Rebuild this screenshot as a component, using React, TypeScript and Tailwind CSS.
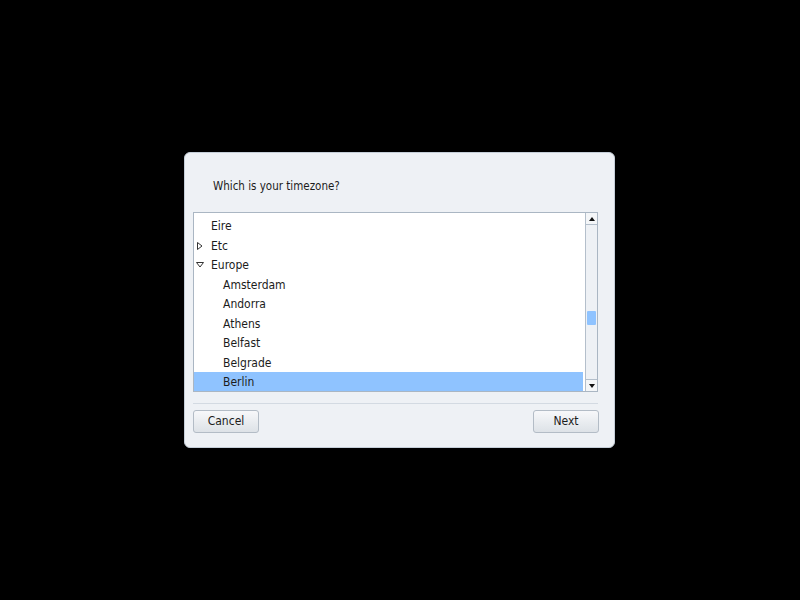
import { useState } from "react";

type Row = { label: string; depth: number; arrow?: "right" | "down" };

const rows: Row[] = [
  { label: "Eire", depth: 0 },
  { label: "Etc", depth: 0, arrow: "right" },
  { label: "Europe", depth: 0, arrow: "down" },
  { label: "Amsterdam", depth: 1 },
  { label: "Andorra", depth: 1 },
  { label: "Athens", depth: 1 },
  { label: "Belfast", depth: 1 },
  { label: "Belgrade", depth: 1 },
  { label: "Berlin", depth: 1 },
];

function Arrow({ dir }: { dir: "right" | "down" }) {
  return dir === "right" ? (
    <svg width="6" height="8" viewBox="0 0 6 8" className="absolute left-[3px] top-[6px]">
      <path d="M0.5 0.5 L5 4 L0.5 7.5 Z" fill="none" stroke="#333" strokeWidth="1" />
    </svg>
  ) : (
    <svg width="8" height="6" viewBox="0 0 8 6" className="absolute left-[2px] top-[7px]">
      <path d="M0.5 0.5 L7.5 0.5 L4 5 Z" fill="none" stroke="#333" strokeWidth="1" />
    </svg>
  );
}

export default function App() {
  const [selected, setSelected] = useState("Berlin");

  return (
    <div
      className="w-full h-[600px] bg-black flex items-center justify-start text-[12px] text-[#1c1c1c] font-stretch-condensed"
      style={{ fontFamily: '"DejaVu Sans Condensed", "DejaVu Sans", sans-serif' }}
    >
      <div className="ml-[184px] w-[431px] h-[296px] bg-[#eef1f5] border border-[#c5ced8] rounded-[6px] flex flex-col pl-[8px] pr-[16px] pt-[24px] pb-[14px]">
        <div className="pl-[20px] h-[18px] leading-[18px] text-[11.5px]">Which is your timezone?</div>
        <div className="mt-[17px] h-[180px] border border-[#aab6c3] bg-white flex">
          <div className="flex-1 pt-[3px] pr-[2px] overflow-hidden">
            {rows.map((r) => (
              <div
                key={r.label}
                onClick={() => setSelected(r.label)}
                className={`relative h-[19.5px] leading-[21px] ${
                  selected === r.label ? "bg-[#8fc3ff]" : ""
                }`}
              >
                {r.arrow && <Arrow dir={r.arrow} />}
                <span className={r.depth === 0 ? "pl-[17px]" : "pl-[29px]"}>{r.label}</span>
              </div>
            ))}
          </div>
          <div className="w-[12px] border-l border-[#b4bfcb] bg-[#eef1f5] flex flex-col">
            <div className="h-[12px] border-b border-[#b4bfcb] bg-[#f4f6f8] flex items-center justify-center">
              <svg width="6" height="4" viewBox="0 0 6 4">
                <path d="M0 4 L3 0 L6 4 Z" fill="#111" />
              </svg>
            </div>
            <div className="flex-1 relative">
              <div className="absolute left-[1px] right-[1px] top-[86px] h-[14px] bg-[#8fc3ff] rounded-[1px]" />
            </div>
            <div className="h-[12px] border-t border-[#b4bfcb] bg-[#f4f6f8] flex items-center justify-center">
              <svg width="6" height="4" viewBox="0 0 6 4">
                <path d="M0 0 L6 0 L3 4 Z" fill="#111" />
              </svg>
            </div>
          </div>
        </div>
        <div className="mt-[11px] h-px bg-[#d3dae2]" />
        <div className="mt-[6px] flex justify-between">
          <button className="w-[66px] h-[23px] border border-[#b3bcc6] rounded-[3px] bg-gradient-to-b from-[#f7f8fa] to-[#dde2e7] leading-[21px]">
            Cancel
          </button>
          <button className="w-[66px] h-[23px] border border-[#b3bcc6] rounded-[3px] bg-gradient-to-b from-[#f7f8fa] to-[#dde2e7] leading-[21px] -mr-px">
            Next
          </button>
        </div>
      </div>
    </div>
  );
}
